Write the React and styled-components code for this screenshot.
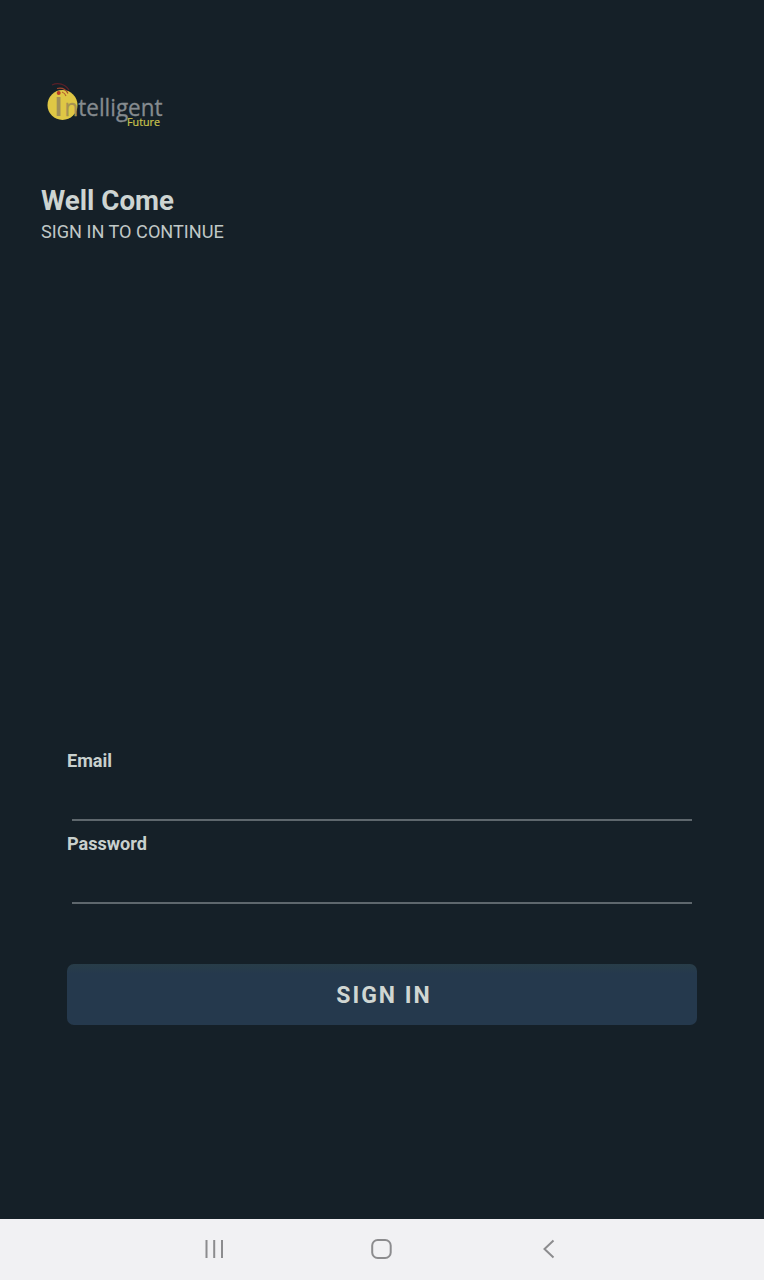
import React from 'react';
import styled, { createGlobalStyle } from 'styled-components';

const GlobalStyle = createGlobalStyle`
  * { box-sizing: border-box; }
  body { margin: 0; background: #152028; font-family: Roboto, sans-serif; }
`;

const Screen = styled.div`
  display: flex;
  flex-direction: column;
  width: 100%;
  height: 1280px;
  background: #152028;
  color: #cdd4d2;
`;

const Header = styled.header`
  display: flex;
  flex-direction: column;
  align-items: flex-start;
  padding: 78px 41px 0;
`;

const Logo = styled.svg`
  display: block;
  width: 126px;
  height: 54px;
`;

const Title = styled.h1`
  margin: 52px 0 0;
  font-size: 27.7px;
  line-height: 34px;
  font-weight: 700;
`;

const Subtitle = styled.p`
  margin: 3px 0 0;
  font-size: 18.15px;
  line-height: 22px;
  color: #c0c8c7;
`;

const Form = styled.form`
  display: flex;
  flex-direction: column;
  margin-top: auto;
  padding: 0 67px 194px;
`;

const Field = styled.label`
  display: flex;
  flex-direction: column;
  height: 83px;
`;

const FieldLabel = styled.span`
  font-size: 18.1px;
  line-height: 22px;
  font-weight: 700;
  color: #c8d0ce;
`;

const Input = styled.input`
  height: 49px;
  margin: 0 5px;
  padding: 0 4px;
  border: 0;
  border-bottom: 2px solid #5e676d;
  border-radius: 0;
  outline: 0;
  background: transparent;
  color: inherit;
  font: 18px Roboto, sans-serif;
`;

const SubmitButton = styled.button`
  height: 61px;
  margin-top: 48px;
  padding: 2px 0 0 4px;
  border: 0;
  border-radius: 7px;
  background: linear-gradient(#283d48 0, #25394d 10px, #25394d 100%);
  color: #d0d6d2;
  font: 700 23px Roboto, sans-serif;
  letter-spacing: 2px;
`;

const NavBar = styled.nav`
  display: flex;
  flex: none;
  justify-content: center;
  align-items: center;
  gap: 143px;
  height: 61px;
  padding-bottom: 2px;
  background: #f1f1f3;
`;

const NavIcon = styled.svg`
  width: 24px;
  height: 24px;
  fill: none;
  stroke: #8c8c8e;
  stroke-width: 2;
`;

export default function App() {
  return (
    <>
      <GlobalStyle />
      <Screen>
        <Header>
          <Logo viewBox="41 78 126 54" role="img" aria-label="Intelligent Future">
            <circle cx="62.5" cy="105" r="15" fill="#dfc745" />
            <path d="M52 85c6-3 13-1 17 5" fill="none" stroke="#5a2028" strokeWidth="1.2" />
            <path d="M57 88.5c5-1 9 1 11 5" fill="none" stroke="#a5462b" strokeWidth="1.2" />
            <path d="M62 92q3 1 4 4" fill="none" stroke="#b75f2c" strokeWidth="1.1" />
            <circle cx="58.7" cy="93" r="2" fill="#b83b25" />
            <rect x="56.7" y="97" width="3.8" height="19" fill="#a08f58" />
            <text x="64.5" y="116" fontFamily="Open Sans, sans-serif" fontSize="23.5" textLength="98" lengthAdjust="spacingAndGlyphs" fill="#858b8f" stroke="#858b8f" strokeWidth="0.3">
              <tspan fill="#a69252" stroke="#a69252">n</tspan>telligent
            </text>
            <text x="127" y="126" fontFamily="Open Sans, sans-serif" fontSize="10.5" textLength="33" lengthAdjust="spacingAndGlyphs" fill="#c9c34d" stroke="#c9c34d" strokeWidth="0.2">Future</text>
          </Logo>
          <Title>Well Come</Title>
          <Subtitle>SIGN IN TO CONTINUE</Subtitle>
        </Header>
        <Form onSubmit={(e) => e.preventDefault()}>
          <Field>
            <FieldLabel>Email</FieldLabel>
            <Input type="email" />
          </Field>
          <Field>
            <FieldLabel>Password</FieldLabel>
            <Input type="password" />
          </Field>
          <SubmitButton type="submit">SIGN IN</SubmitButton>
        </Form>
        <NavBar>
          <NavIcon viewBox="0 0 24 24"><path d="M3.5 3v18M11.2 3v18M19 3v18" /></NavIcon>
          <NavIcon viewBox="0 0 24 24"><rect x="2.2" y="3" width="18.5" height="18" rx="5.5" /></NavIcon>
          <NavIcon viewBox="0 0 24 24"><path d="M16.5 3.5L7.5 12l9 8.5" /></NavIcon>
        </NavBar>
      </Screen>
    </>
  );
}
